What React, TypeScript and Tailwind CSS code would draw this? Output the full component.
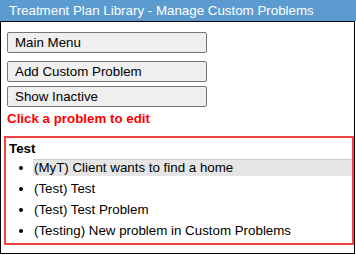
export default function App() {
  const items = [
    "(MyT) Client wants to find a home",
    "(Test) Test",
    "(Test) Test Problem",
    "(Testing) New problem in Custom Problems",
  ];
  return (
    <div className="w-[356px] h-[255px] bg-white font-['Liberation_Sans',Arial,sans-serif] text-[13.33px]">
      <div className="h-[21px] bg-[#5b9bd0] text-white leading-[21px] pl-[9px]">
        Treatment Plan Library - Manage Custom Problems
      </div>
      <div className="w-[355px] h-[233px] border border-black px-[6px] pt-[10px]">
        <div className="flex flex-col items-start">
          <button className="w-[200px] h-[21px] bg-[#efefef] border border-[#767676] rounded-[2px] text-left pl-[7px] leading-[18px] text-black">
            Main Menu
          </button>
          <button className="mt-[8px] w-[200px] h-[21px] bg-[#efefef] border border-[#767676] rounded-[2px] text-left pl-[7px] leading-[18px] text-black">
            Add Custom Problem
          </button>
          <button className="mt-[4px] w-[200px] h-[21px] bg-[#efefef] border border-[#767676] rounded-[2px] text-left pl-[7px] leading-[18px] text-black">
            Show Inactive
          </button>
          <div className="mt-[3px] leading-[18px] font-bold text-[#ff0000]">Click a problem to edit</div>
        </div>
        <div className="-ml-[3px] mt-[8px] w-[350px] h-[109px] border-2 border-[#f24545] pt-[3px]">
          <div className="pl-[3px] leading-[16px] font-bold text-black">Test</div>
          <div className="flex flex-col">
            {items.map((t, i) => (
              <div key={t} className="h-[21px] flex items-center">
                <span className="ml-[13px] w-[4px] h-[4px] rounded-full bg-black shrink-0" />
                <span
                  className={
                    i === 0
                      ? "ml-[10px] flex-1 h-[17px] leading-[16px] pl-[1px] bg-[#e5e5e5] border-t border-[#cccccc] text-black"
                      : "ml-[10px] flex-1 h-[17px] leading-[16px] pl-[1px] border-t border-transparent text-black"
                  }
                >
                  {t}
                </span>
              </div>
            ))}
          </div>
        </div>
      </div>
    </div>
  );
}
